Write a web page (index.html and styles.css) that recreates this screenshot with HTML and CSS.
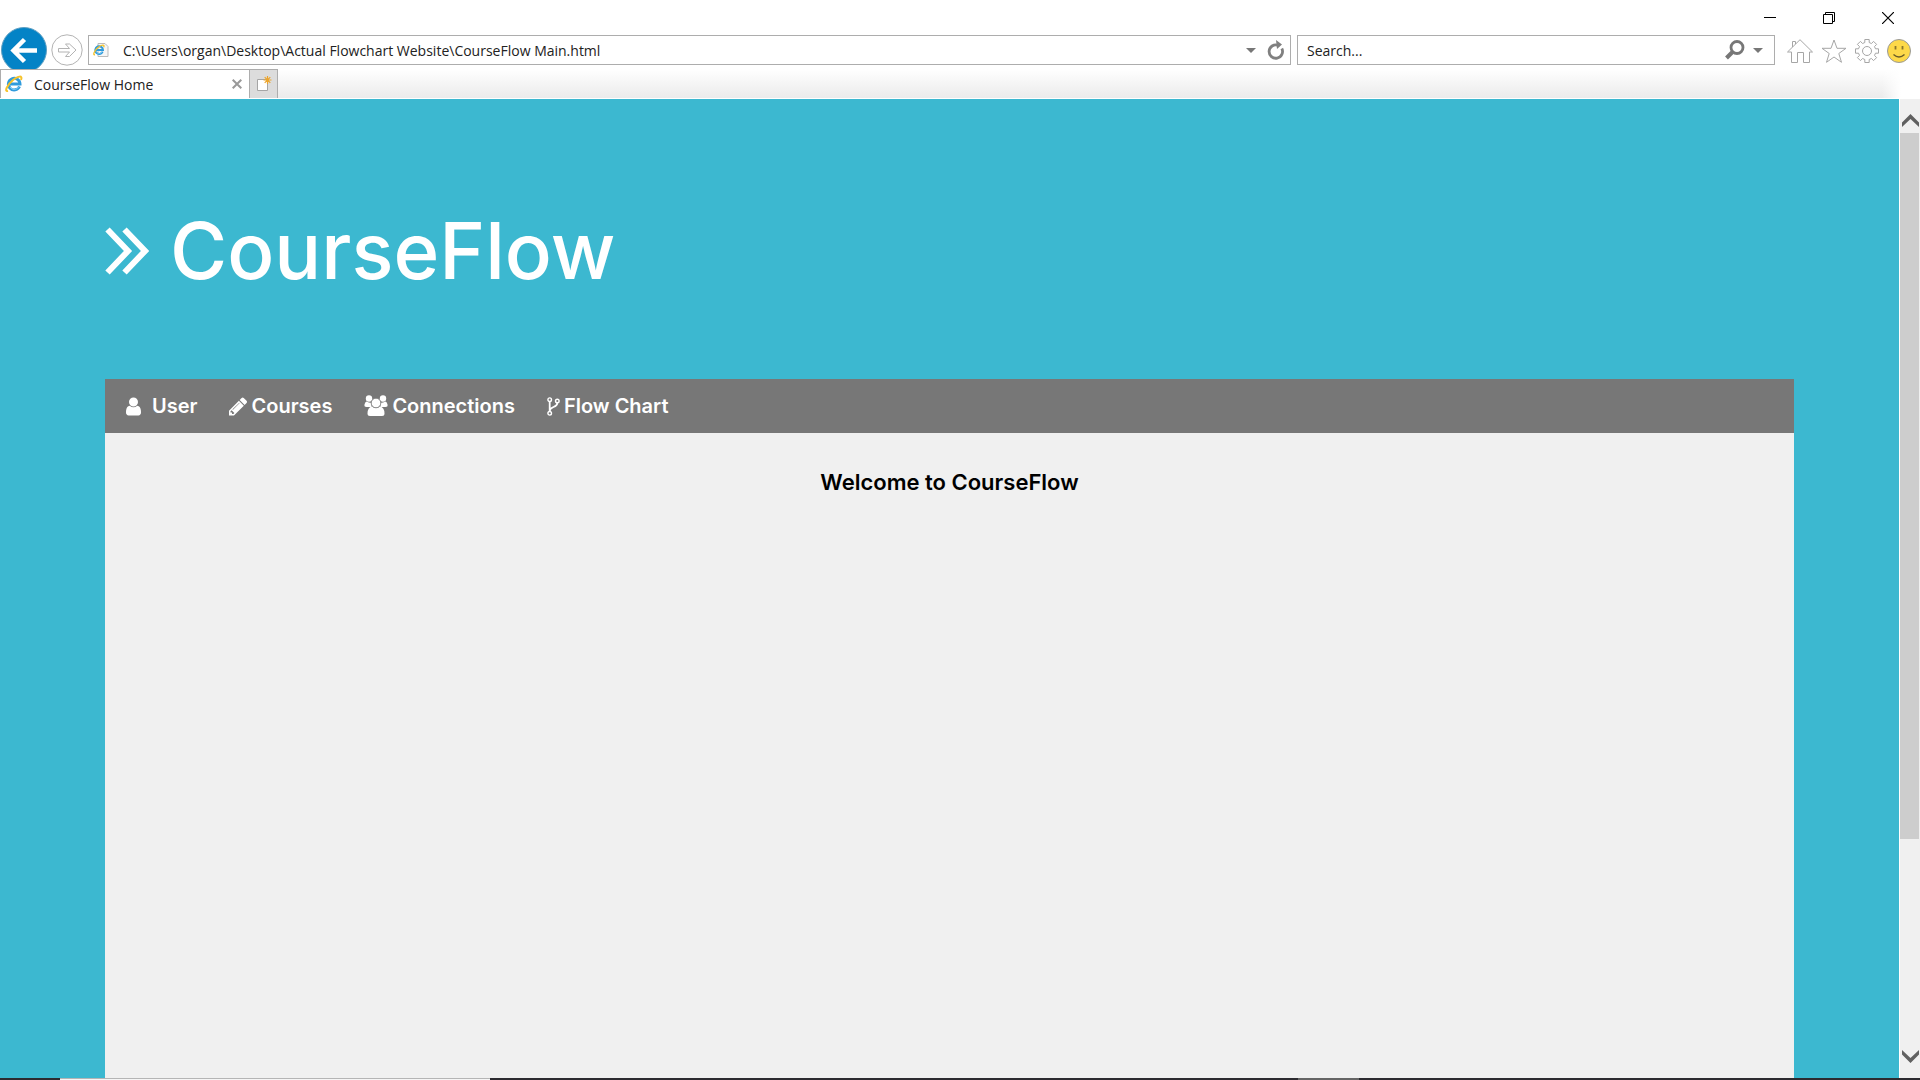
FILE: index.html
```html
<!DOCTYPE html>
<html lang="en">
<head>
<meta charset="utf-8">
<title>CourseFlow Home</title>
<link rel="stylesheet" href="styles.css">
</head>
<body>
<svg class="defs" aria-hidden="true">
  <symbol id="ie" viewBox="0 0 18 18">
    <path d="M14.500 11.500A5.800 5.800 0 1 1 15 9H5" fill="none" stroke="#2f9bdc" stroke-width="3"/>
    <path d="M13.500 12A5 5 0 0 1 5 12" fill="none" stroke="#8fd3f5" stroke-width="1"/>
    <path d="M3 16C-1 17 2 10 8 5C13 1 18 0 16 5" fill="none" stroke="#f5c22b" stroke-width="2"/>
  </symbol>
</svg>
<div class="window">
  <header class="chrome">
    <div class="titlebar">
      <button class="plain" aria-label="Minimize"><svg width="12" height="12" viewBox="0 0 12 12"><path d="M0 5.500h12" stroke="#000"/></svg></button>
      <button class="plain" aria-label="Restore"><svg width="12" height="12" viewBox="0 0 12 12" fill="none" stroke="#000"><path d="M.5 2.500h9v9h-9zM2.500 2.500v-2h9v9h-2"/></svg></button>
      <button class="plain" aria-label="Close"><svg width="12" height="12" viewBox="0 0 12 12"><path d="M0 0l12 12M12 0L0 12" stroke="#000" stroke-width="1.200"/></svg></button>
    </div>
    <div class="toolbar">
      <button class="plain back" aria-label="Back"><svg width="46" height="42" viewBox="0 0 46 42"><circle cx="23" cy="23" r="22.500" fill="#0483c6" stroke="#5f9fc2"/><path d="M36 23.500H15M23.500 12.500l-11 11 11 11" fill="none" stroke="#fff" stroke-width="4.500"/></svg></button>
      <button class="plain forward" aria-label="Forward"><svg width="32" height="32" viewBox="0 0 32 32" fill="#fff" stroke="#b3b3b3"><circle cx="16" cy="16" r="15.200"/><path d="M7.500 14.500h11l-4-4.500h4l6.500 6-6.500 6.500h-4l4-4.500h-11z"/></svg></button>
      <form class="field address">
        <svg width="16" height="16" viewBox="0 0 16 16"><path d="M5 1.500h7l3 3v10H5z" fill="#f6f6f6" stroke="#bbb"/><use href="#ie" x="0" y="2" width="12" height="12"/></svg>
        <input type="text" aria-label="Address" value="C:\Users\organ\Desktop\Actual Flowchart Website\CourseFlow Main.html">
        <button type="button" class="plain" aria-label="History"><svg width="10" height="5" viewBox="0 0 10 5"><path d="M0 0h10L5 5z" fill="#777"/></svg></button>
        <button type="button" class="plain" aria-label="Refresh"><svg width="18" height="20" viewBox="0 0 18 20"><path d="M11 5.200A6.700 6.700 0 1 0 14.800 8.500" fill="none" stroke="#808080" stroke-width="2.800"/><path d="M9 0l6 4.500-5 4.500z" fill="#808080"/></svg></button>
      </form>
      <form class="field search">
        <input type="text" aria-label="Search" value="Search...">
        <button type="button" class="plain" aria-label="Search"><svg width="20" height="20" viewBox="0 0 20 20" fill="none" stroke="#777"><circle cx="12" cy="7.500" r="6" stroke-width="2.800"/><path d="M7.500 12L1.500 18" stroke-width="4"/></svg></button>
        <button type="button" class="plain" aria-label="Search options"><svg width="10" height="5" viewBox="0 0 10 5"><path d="M0 0h10L5 5z" fill="#777"/></svg></button>
      </form>
      <div class="tools">
        <button class="plain" aria-label="Home"><svg width="26" height="24" viewBox="0 0 26 24" fill="#fff" stroke="#a6a6a6"><path d="M.5 13L13 .7 25.500 13H22.500v10.500h-6v-10h-6v10h-6V13zM5.500 8V2.500h3V5"/></svg></button>
        <button class="plain" aria-label="Favorites"><svg width="26" height="24" viewBox="0 0 26 24" fill="#fff" stroke="#a6a6a6"><path d="M13 1l3 8.300h9L17.800 14.500l2.700 8.800L13 18l-7.500 5.300 2.700-8.800L1 9.300h9z"/></svg></button>
        <button class="plain" aria-label="Settings"><svg width="24" height="24" viewBox="0 0 24 24" fill="#fff" stroke="#a6a6a6"><path d="M9.800.5h4.400v3l2.200 1 2.200-2.100 3 3-2.100 2.200 1 2.200h3v4.400h-3l-1 2.200 2.100 2.200-3 3-2.200-2.100-2.200 1v3H9.800v-3l-2.200-1-2.200 2.100-3-3 2.100-2.200-1-2.200h-3V9.800h3l1-2.200-2.100-2.200 3-3 2.200 2.100 2.200-1z"/><circle cx="12" cy="12" r="4.500"/></svg></button>
        <button class="plain" aria-label="Feedback"><svg width="24" height="24" viewBox="0 0 24 24"><circle cx="12" cy="12" r="11.500" fill="#fdd949" stroke="#999"/><path d="M6.500 15.500q5.500 5 11 0" fill="none" stroke="#6b5d28" stroke-width="1.400"/><path d="M8.500 7v3.500M15.500 7v3.500" stroke="#8a762c" stroke-width="1.800"/></svg></button>
      </div>
    </div>
    <div class="tabs">
      <div class="tab">
        <svg width="18" height="18"><use href="#ie"/></svg>
        <span>CourseFlow Home</span>
        <button class="plain" aria-label="Close tab"><svg width="10" height="10" viewBox="0 0 10 10"><path d="M.7.7l8.600 8.600M9.300.7L.7 9.300" stroke="#999" stroke-width="2"/></svg></button>
      </div>
      <button class="plain new-tab" aria-label="New tab"><svg width="16" height="16" viewBox="0 0 16 16"><path d="M1.500 3.500h10v11h-10z" fill="#fff" stroke="#a5a5a5"/><path d="M11.500 0v8M7.500 4h8M8.700 1.200l5.600 5.600M14.300 1.200L8.700 6.800" stroke="#eda52b" stroke-width="1.200"/></svg></button>
    </div>
  </header>
  <div class="viewport">
    <div class="page">
      <h1 class="brand">
        <svg width="44" height="48" viewBox="0 0 44 48" fill="none" stroke="#fff" stroke-width="6" stroke-linejoin="miter"><path d="M2.500 2.500L23 24 2.500 45.500M19.500 2.500L40 24 19.500 45.500"/></svg>
        <span>CourseFlow</span>
      </h1>
      <nav class="menu">
        <a class="user" href="#user"><svg width="15" height="19" viewBox="256 128 1280 1536"><path d="M1536 1399q0 109-62.500 187t-150.500 78h-854q-88 0-150.500-78t-62.500-187q0-85 8.500-160.500t31.500-152 58.500-131 94-89 134.500-34.500q131 128 313 128t313-128q76 0 134.500 34.500t94 89 58.500 131 31.500 152 8.500 160.500zm-256-887q0 159-112.500 271.500t-271.500 112.500-271.500-112.500-112.500-271.500 112.500-271.500 271.500-112.500 271.500 112.500 112.500 271.500z"/></svg>User</a>
        <a href="#courses"><svg width="18" height="19" viewBox="128 128 1515 1536"><path d="M491 1536l91-91-235-235-91 91v107h128v128h107zm523-928q0-22-22-22-10 0-17 7l-542 542q-7 7-7 17 0 22 22 22 10 0 17-7l542-542q7-7 7-17zm-54-192l416 416-832 832h-416v-416zm683 96q0 53-37 90l-166 166-416-416 166-165q36-38 90-38 53 0 91 38l235 234q37 39 37 91z"/></svg>Courses</a>
        <a href="#connections"><svg width="24" height="22" viewBox="0 0 24 22"><circle cx="5" cy="3.500" r="3.200"/><circle cx="19" cy="3.500" r="3.200"/><path d="M2.500 6.500q4 2 5 1v4.500H2.500Q0 12 .5 9.500t2-3zM21.500 6.500q-4 2-5 1v4.500h5q2.500 0 2-2.500t-2-3z"/><path d="M8 11.500q4 3 8 0 4.500 1 4.500 7 0 2.500-2.500 2.500H6q-2.500 0-2.500-2.500 0-6 4.500-7z"/><circle cx="12" cy="8" r="4.800" stroke="#777" stroke-width=".8"/></svg>Connections</a>
        <a href="#flow-chart"><svg width="13" height="19" viewBox="0 0 13 19"><g fill="none" stroke="#fff"><circle cx="2.700" cy="2.700" r="1.800" stroke-width="1.400"/><circle cx="2.700" cy="16.300" r="1.800" stroke-width="1.400"/><circle cx="10.300" cy="4" r="1.800" stroke-width="1.400"/><path d="M2.700 4.500v10M10.300 6c0 5-7.600 3-7.600 8" stroke-width="1.800"/></g></svg>Flow Chart</a>
      </nav>
      <main class="content"><h2>Welcome to CourseFlow</h2></main>
    </div>
    <div class="scrollbar" aria-hidden="true">
      <svg width="17" height="13" viewBox="0 0 17 13"><path d="M0 8.500L8.500 0 17 8.500V13L8.500 5 0 13z" fill="#606060"/></svg>
      <div class="track"><div class="thumb"></div></div>
      <svg width="17" height="13" viewBox="0 0 17 13"><path d="M0 4.500L8.500 13 17 4.500V0L8.500 8 0 0z" fill="#606060"/></svg>
    </div>
  </div>
  <footer class="taskbar"><div class="task-search"></div><div class="task-active"></div></footer>
</div>
</body>
</html>
```
FILE: styles.css
```css
* { box-sizing: border-box; }
body { margin: 0; font-family: "Open Sans", "Noto Sans", sans-serif; }
svg { display: block; flex: none; }
.defs { display: none; }
.window { display: flex; flex-direction: column; height: 100vh; overflow: hidden; background: #fff; }
.plain { display: flex; align-items: center; justify-content: center; padding: 0; border: 0; background: none; }

/* Browser frame */
.chrome { flex: none; }
.titlebar { display: flex; justify-content: flex-end; gap: 47px; height: 27px; padding: 12px 26px 0 0; }
.titlebar .plain { height: 12px; }
.toolbar { display: flex; align-items: flex-start; height: 42px; padding-left: 1px; }
.forward { margin: 7px 5px 0 4px; }
.field { display: flex; align-items: center; height: 30px; margin-top: 8px; border: 1px solid #adadad; background: #fff; }
.field input { flex: 1; min-width: 0; height: 28px; padding: 0; border: 0; outline: 0; background: none; color: #222; font: 14px "Open Sans", "Noto Sans", sans-serif; }
.address { flex: 1; margin-right: 6px; padding: 0 5px 0 4px; gap: 11px; }
.address input { padding-left: 3px; }
.search { flex: 0 0 25%; max-width: 478px; padding: 0 11px 0 9px; gap: 8px; }
.tools { display: flex; align-items: center; gap: 8px; padding: 12px 9px 0 12px; }
.tabs { display: flex; height: 30px; border-bottom: 1px solid #fff; background: linear-gradient(to right, transparent 98%, #fff 99%), linear-gradient(#fff, #ebebeb); }
.tab { display: flex; align-items: center; width: 250px; padding: 0 7px 0 4px; gap: 11px; border: 1px solid #adadad; border-bottom: 0; background: #fff; color: #222; font-size: 14px; }
.tab span { flex: 1; }
.new-tab { width: 28px; border: 1px solid #adadad; border-width: 1px 1px 0 0; background: #dcdcdc; }

/* Page */
.viewport { display: flex; flex: 1; min-height: 0; }
.page { display: flex; flex: 1; flex-direction: column; padding: 0 105px; background: #3cb8d0; font-family: Inter, Lato, sans-serif; }
.brand { display: flex; align-items: center; gap: 21px; height: 280px; margin: 0; padding-top: 24px; color: #fff; font-size: 78px; font-weight: 500; line-height: 100px; }
.menu { display: flex; align-items: center; gap: 32px; height: 54px; padding: 0 21px; background: #777; }
.menu a { display: flex; align-items: center; gap: 4px; color: #fff; font-size: 20px; font-weight: 600; text-decoration: none; }
.menu .user { gap: 11px; }
.menu svg { fill: #fff; }
.content { flex: 1; padding-top: 34px; background: #f0f0f0; text-align: center; }
.content h2 { margin: 0; color: #000; font-size: 22px; font-weight: 600; line-height: 30px; }
.scrollbar { display: flex; flex-direction: column; align-items: center; width: 21px; padding: 15px 0; border-left: 1px solid #fff; background: #f0f0f0; }
.track { flex: 1; align-self: stretch; padding: 6px 1px 0 0; }
.thumb { height: 77%; background: #cdcdcd; }

/* Strip of the desktop taskbar */
.taskbar { display: flex; flex: none; height: 2px; padding-left: 60px; background: #2c2b30; }
.task-search { width: 430px; border-top: 1px solid #b5b5b5; background: #f5f5f5; }
.task-active { width: 61px; margin-left: 808px; background: #656565; }
```
